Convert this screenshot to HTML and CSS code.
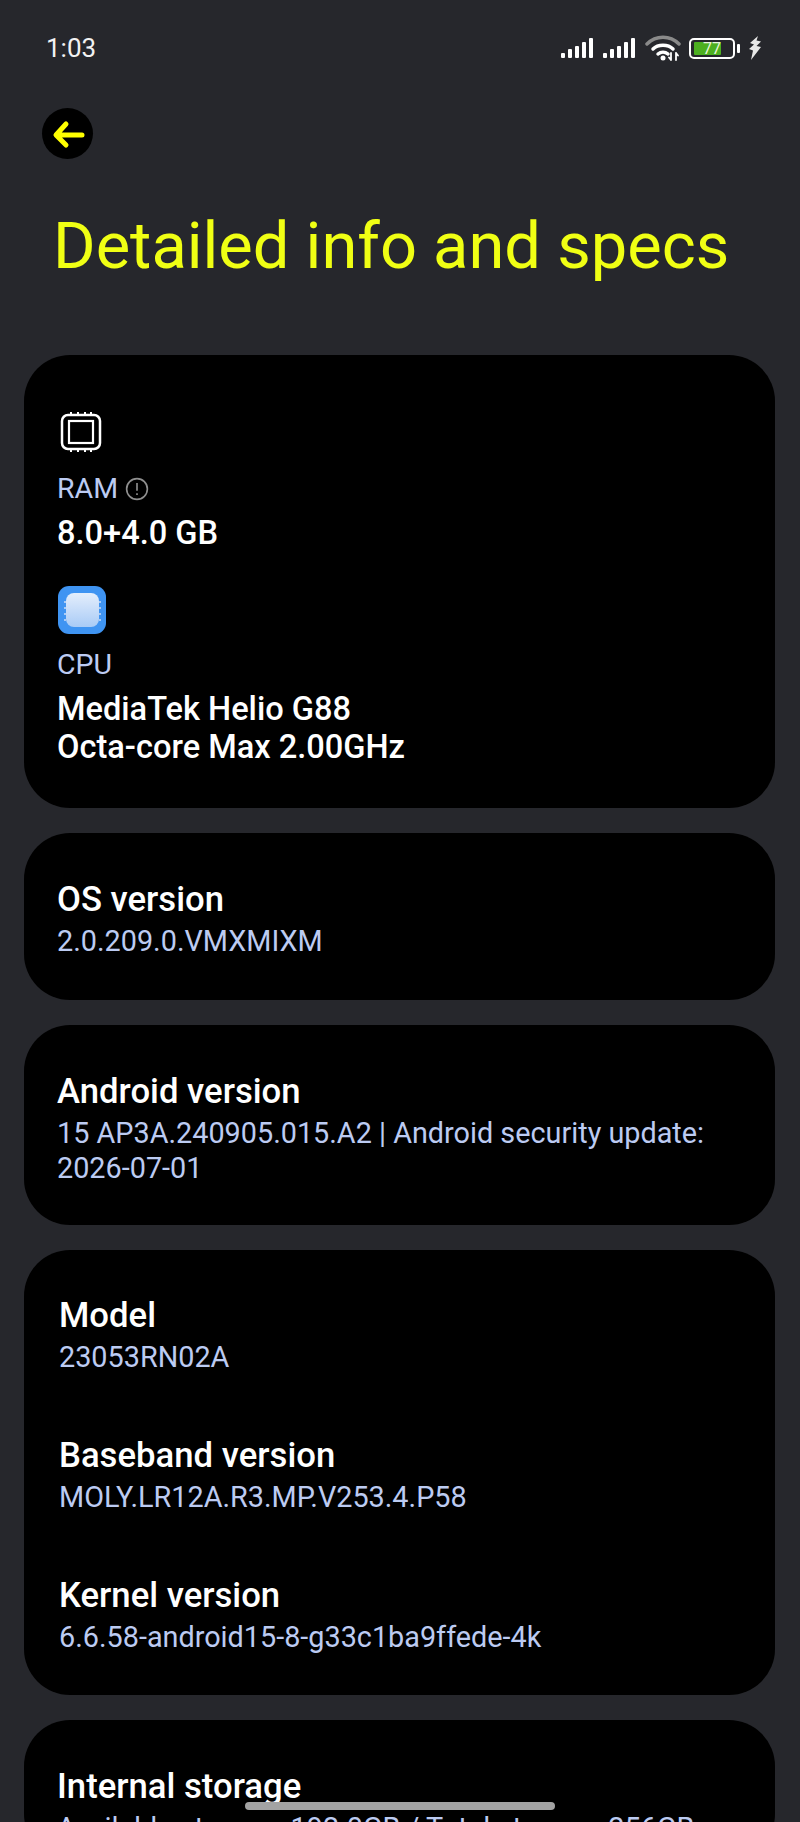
FILE: index.html
```html
<!DOCTYPE html>
<html>
<head>
  <title>Detailed info and specs</title>
  <link rel="stylesheet" href="styles.css">
</head>
<body>

  <div class="status-bar">
    <span class="clock">1:03</span>
    <div class="status-icons">
      <svg class="signal" width="34" height="22" viewBox="0 0 34 22" fill="#fff">
        <rect x="0" y="16" width="4" height="5" rx="1"/><rect x="7" y="12" width="4" height="9" rx="1"/><rect x="14" y="9" width="4" height="12" rx="1"/><rect x="21" y="5" width="4" height="16" rx="1"/><rect x="28" y="1" width="4" height="20" rx="1"/>
      </svg>
      <svg class="signal" width="34" height="22" viewBox="0 0 34 22" fill="#fff">
        <rect x="0" y="16" width="4" height="5" rx="1"/><rect x="7" y="12" width="4" height="9" rx="1"/><rect x="14" y="9" width="4" height="12" rx="1"/><rect x="21" y="5" width="4" height="16" rx="1"/><rect x="28" y="1" width="4" height="20" rx="1"/>
      </svg>
      <svg class="wifi" width="36" height="26" viewBox="0 0 36 26" fill="none" stroke-linecap="round">
        <path d="M2 9C11 0 25 0 34 9" stroke="#8a8a8a" stroke-width="3.5"/>
        <path d="M8 14C13 9 23 9 28 14" stroke="#fff" stroke-width="3.5"/>
        <path d="M13 19C16 16.500 20 16.500 23 19" stroke="#fff" stroke-width="3.5"/>
        <circle cx="18" cy="23" r="2.500" fill="#fff"/>
        <path d="M26 18V25M26 25L24 22.500M31 25V18M31 18L33 20.500" stroke="#fff" stroke-width="1.800"/>
      </svg>
      <div class="battery">
        <div class="battery-body"><div class="battery-fill"></div><span class="battery-num">77</span></div>
        <div class="battery-tip"></div>
      </div>
      <svg class="bolt" width="14" height="24" viewBox="0 0 14 24" fill="#e8e8e8">
        <path d="M10 0L2 7L6 8.500L1 13L5 14.500L3 24L13 11L8.500 10L13 5.500L8.500 4.500Z"/>
      </svg>
    </div>
  </div>

  <div class="back-row">
    <div class="back-btn">
      <svg width="36" height="36" viewBox="0 0 36 36" fill="none" stroke="#ffff00" stroke-width="5" stroke-linecap="round" stroke-linejoin="round">
        <path d="M32 19H7M16 8L6 19L16 29"/>
      </svg>
    </div>
  </div>

  <h1 class="page-title">Detailed info and specs</h1>

  <div class="card card-first">
    <svg class="ram-icon" width="42" height="42" viewBox="0 0 42 42" fill="none" stroke="#fff">
      <rect x="2" y="4" width="38" height="34" rx="6" stroke-width="2.500"/>
      <rect x="9" y="10" width="24" height="22" stroke-width="2.200"/>
      <path d="M11 1V4M18 1V4M25 1V4M31 1V4M11 38V41M18 38V41M25 38V41M31 38V41" stroke-width="2"/>
    </svg>
    <div class="sub-label sub-label-ram">RAM
      <svg class="info-icon" width="24" height="24" viewBox="0 0 22 22" fill="none" stroke="#8f8f8f" stroke-width="1.500">
        <circle cx="11" cy="11" r="9.500"/>
        <path d="M11 5.500V12.500M11 15V16.500"/>
      </svg>
    </div>
    <div class="main-value">8.0+4.0 GB</div>

    <svg class="cpu-icon" width="48" height="48" viewBox="0 0 48 48">
      <defs>
        <linearGradient id="chip" x1="0" y1="0" x2="0" y2="1">
          <stop offset="0" stop-color="#e4eefc"/>
          <stop offset="1" stop-color="#a9cbf6"/>
        </linearGradient>
      </defs>
      <rect width="48" height="48" rx="11" fill="#3f94f2"/>
      <rect x="8" y="7" width="33" height="34" rx="8" fill="url(#chip)"/>
      <path d="M6 16H8M6 22H8M6 28H8M6 34H8M41 16H43M41 22H43M41 28H43M41 34H43" stroke="#a9cbf6" stroke-width="2"/>
    </svg>
    <div class="sub-label">CPU</div>
    <div class="main-value">MediaTek Helio G88<br>Octa-core Max 2.00GHz</div>
  </div>

  <div class="card card-os">
    <div class="item-title">OS version</div>
    <div class="item-value">2.0.209.0.VMXMIXM</div>
  </div>

  <div class="card card-android">
    <div class="item-title">Android version</div>
    <div class="item-value">15 AP3A.240905.015.A2 | Android security update:<br>2026-07-01</div>
  </div>

  <div class="card card-model">
    <div class="item">
      <div class="item-title">Model</div>
      <div class="item-value">23053RN02A</div>
    </div>
    <div class="item">
      <div class="item-title">Baseband version</div>
      <div class="item-value">MOLY.LR12A.R3.MP.V253.4.P58</div>
    </div>
    <div class="item">
      <div class="item-title">Kernel version</div>
      <div class="item-value">6.6.58-android15-8-g33c1ba9ffede-4k</div>
    </div>
  </div>

  <div class="card card-storage">
    <div class="item-title">Internal storage</div>
    <div class="item-value">Available storage: 192.0GB / Total storage: 256GB</div>
  </div>

  <div class="home-bar"></div>

</body>
</html>
```

FILE: styles.css
```css
html, body {
  margin: 0;
  height: 1822px;
  overflow: hidden;
}

body {
  position: relative;
  background-color: #26272c;
  font-family: Roboto, "Liberation Sans", sans-serif;
  color: #fff;
}

.status-bar {
  display: flex;
  justify-content: space-between;
  align-items: center;
  height: 30px;
  padding: 33px 38px 0 46px;
}

.clock {
  font-size: 26px;
  color: #f2f2f2;
}

.status-icons {
  display: flex;
  align-items: center;
  gap: 8px;
}

.battery {
  display: flex;
  align-items: center;
  gap: 2px;
}

.battery-body {
  position: relative;
  width: 42px;
  height: 17px;
  border: 2px solid #fff;
  border-radius: 5px;
}

.battery-fill {
  width: 27px;
  height: 13px;
  margin: 2px 3px;
  background-color: #4caf20;
  border-radius: 1px;
}

.battery-num {
  position: absolute;
  left: 12px;
  top: 0;
  font-size: 16px;
  line-height: 17px;
  color: #e8f5dc;
}

.battery-tip {
  width: 3px;
  height: 9px;
  background-color: #fff;
  border-radius: 1px;
}

.back-row {
  padding: 45px 0 0 42px;
}

.back-btn {
  display: flex;
  align-items: center;
  justify-content: center;
  width: 51px;
  height: 51px;
  border-radius: 50%;
  background-color: #000;
}

.page-title {
  margin: 47px 0 0 53px;
  font-size: 65px;
  font-weight: 400;
  line-height: 80px;
  color: #f0ff14;
}

.card {
  margin: 0 25px 25px 24px;
  background-color: #000;
  border-radius: 46px;
  padding: 0 33px;
  box-sizing: border-box;
}

.card-first {
  margin-top: 69px;
  height: 453px;
  padding-top: 56px;
}

.ram-icon, .cpu-icon {
  display: block;
}

.ram-icon {
  margin-left: 3px;
}

.cpu-icon {
  margin-top: 33px;
  margin-left: 1px;
}

.sub-label {
  display: flex;
  align-items: center;
  gap: 7px;
  font-size: 28.5px;
  line-height: 34px;
  color: #bccbf2;
  margin-top: 14px;
}

.sub-label-ram {
  margin-top: 19px;
}

.main-value {
  font-size: 32.6px;
  font-weight: 500;
  line-height: 38.5px;
  margin-top: 8px;
}

.item-title {
  font-size: 34.7px;
  font-weight: 500;
  line-height: 40px;
}

.item-value {
  font-size: 28.8px;
  line-height: 35px;
  margin-top: 5px;
  color: #bccbf2;
}

.card-os {
  height: 167px;
  padding-top: 46px;
}

.card-android {
  height: 200px;
  padding-top: 46px;
}

.card-model {
  height: 445px;
  padding: 45px 0 0 35px;
}

.item {
  margin-bottom: 60px;
}

.card-storage {
  height: 140px;
  padding-top: 46px;
}

.home-bar {
  position: absolute;
  left: 245px;
  top: 1802px;
  width: 310px;
  height: 8px;
  border-radius: 4px;
  background-color: #a3a3a3;
}
```
